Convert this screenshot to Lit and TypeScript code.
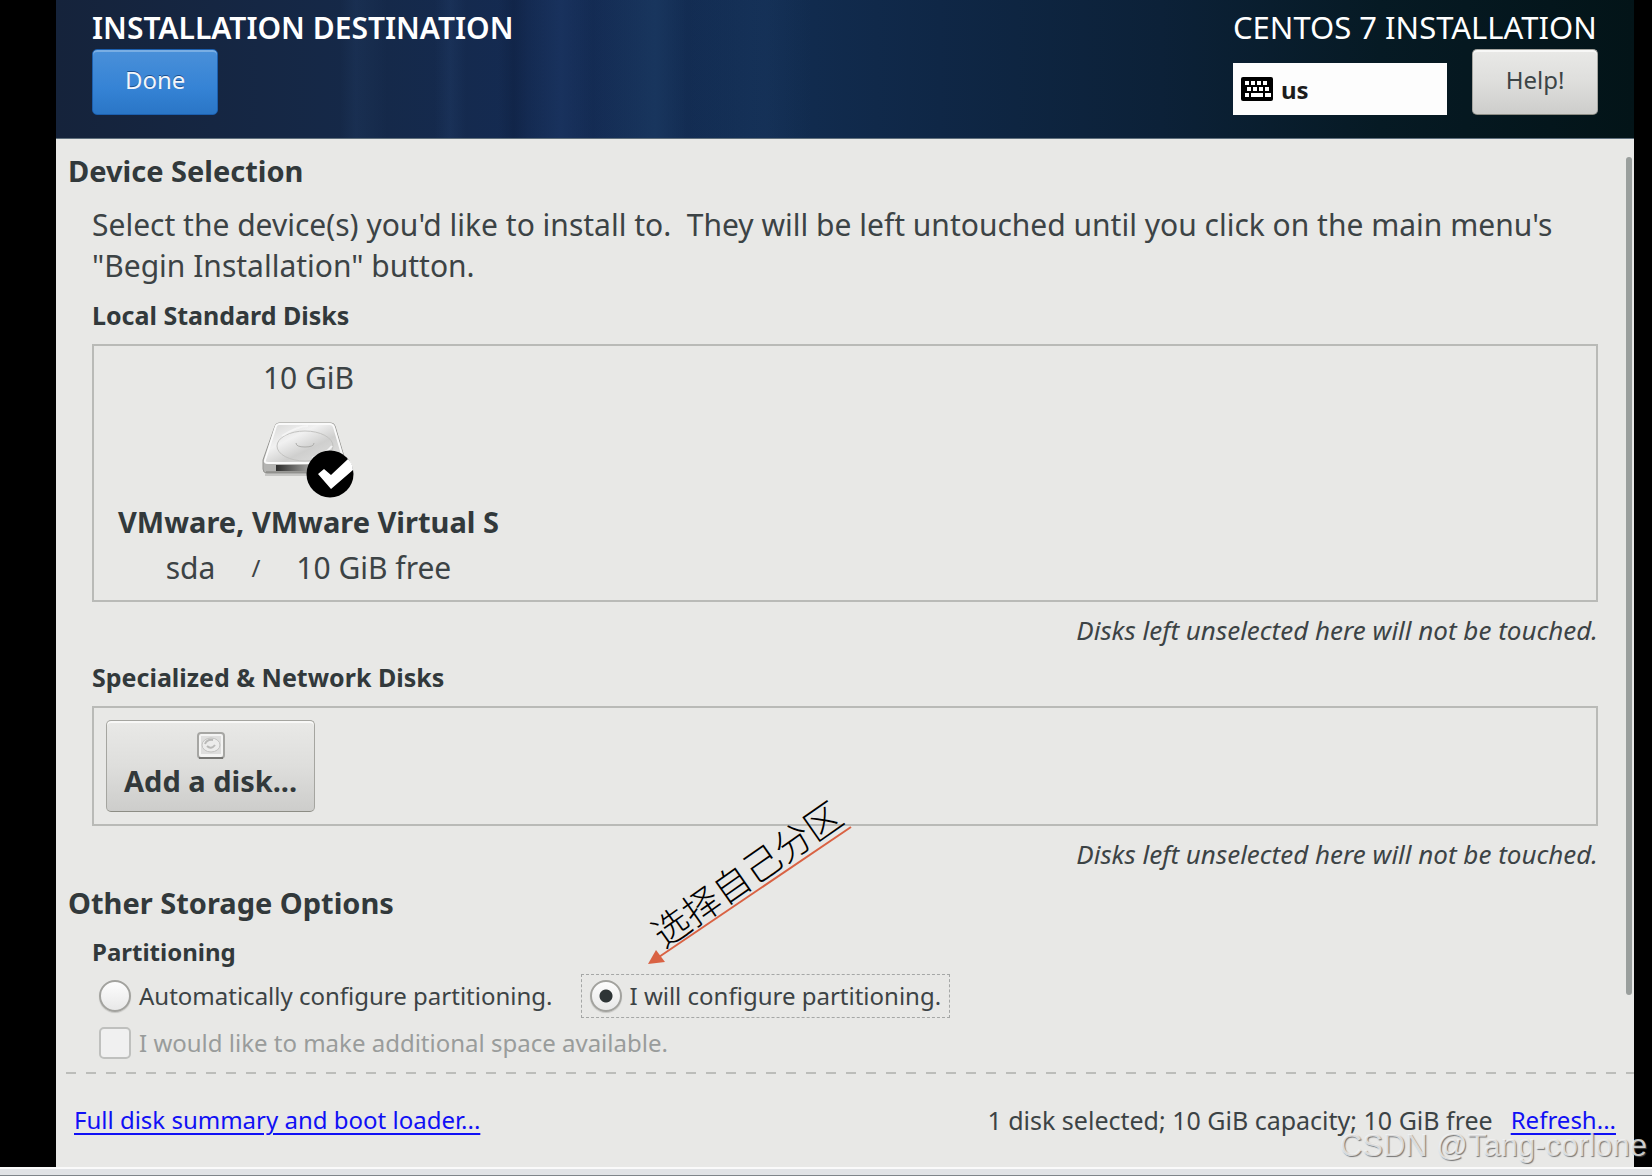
import { LitElement, html, css, svg } from "lit";
import { customElement, state } from "lit/decorators.js";

const keyRows = [
  { y: 4, keys: [[4, 4], [10, 4], [16, 4], [22, 4]] },
  { y: 10, keys: [[6, 4], [12, 4], [18, 4], [24, 4]] },
  { y: 16, keys: [[4, 4], [10, 12], [24, 6]] },
];

@customElement("app-root")
export class AppRoot extends LitElement {
  @state() private mode = "manual";

  static styles = css`
    :host {
      display: block;
      font-family: "Noto Sans", "Open Sans", sans-serif;
      color: #3c4345;
    }
    * { box-sizing: border-box; }
    button { font: inherit; color: inherit; margin: 0; }
    .screen {
      position: relative;
      display: flex;
      flex-direction: column;
      min-height: 100vh;
      background: #000;
    }
    .window {
      flex: 1;
      display: flex;
      flex-direction: column;
      margin: 0 18px 0 56px;
      background: #e8e8e6;
    }
    .header {
      display: flex;
      justify-content: space-between;
      padding: 6px 36px 23px;
      border-bottom: 1px solid #5f6f7c;
      color: #fff;
      background:
        linear-gradient(90deg, transparent 18%, rgba(80, 130, 200, 0.07) 19%, transparent 21% 24%, rgba(80, 130, 200, 0.08) 25%, transparent 26% 28%, rgba(0, 10, 30, 0.16) 29%, transparent 30%, rgba(80, 130, 200, 0.08) 32%, transparent 34%, rgba(80, 150, 200, 0.09) 38%, transparent 40%, rgba(80, 130, 200, 0.05) 45%, transparent 48%),
        linear-gradient(90deg, #15233b 0%, #152949 20%, #142b54 32%, #122d52 44%, #0f2746 56%, #0c2138 70%, #061a24 84%, #031418 100%);
    }
    .title {
      margin: 0;
      font-size: 30px;
      line-height: 43px;
      font-weight: 600;
    }
    .product { font-size: 31px; font-weight: 400; }
    .tools { display: flex; align-items: flex-end; gap: 25px; }
    .btn {
      height: 66px;
      min-width: 126px;
      border: 1px solid #a5a5a0;
      border-bottom-color: #8d8d85;
      border-radius: 5px;
      background: linear-gradient(#e9e9e7, #dededc 50%, #cdcdcb);
      box-shadow: inset 0 2px 0 #f8f8f7;
      color: #3c4446;
      font-size: 24px;
      line-height: 36px;
      padding: 0 32px 4px;
    }
    .primary {
      border-color: #1c5fae;
      background: linear-gradient(#4a90d9, #3583d5 60%, #2a76c6);
      box-shadow: inset 0 2px 0 #79aee4;
      color: #f2f6fb;
      text-shadow: 0 -1px 0 #1d4f8c;
    }
    .layout {
      display: flex;
      align-items: center;
      gap: 8px;
      width: 214px;
      height: 52px;
      padding: 0 8px;
      border: 0;
      background: #fdfdfd;
      color: #1c1c1c;
      font-size: 24px;
      font-weight: 700;
    }
    .body { flex: 1; display: flex; }
    .content { flex: 1; min-width: 0; padding: 12px 28px 0 12px; }
    .scroll { width: 8px; padding: 18px 2px 77px 0; display: flex; }
    .thumb { flex: 1; border-radius: 3px; background: #9a9f9d; }
    h2, h3, .name, .add { color: #32393b; font-weight: 700; }
    h2 { margin: 0; font-size: 29px; line-height: 40px; }
    .section + h2 { margin-top: 11px; }
    h3 { margin: 11px 0; font-size: 25px; line-height: 36px; }
    .sub { margin-bottom: 4px; font-size: 24px; }
    .section { padding-left: 24px; }
    .lead { margin: 13px 0 0; font-size: 30px; line-height: 41px; white-space: pre-wrap; }
    .panel { display: flex; border: 2px solid #b9bab7; padding: 12px; }
    .note { margin: 10px 0; font-size: 26px; line-height: 36px; font-style: italic; text-align: right; }
    .disk {
      display: flex;
      flex-direction: column;
      align-items: center;
      padding: 0 12px;
      border: 0;
      background: none;
      font-size: 30px;
      line-height: 40px;
    }
    .drive { margin: 24px 0 4px; display: block; }
    .name { font-size: 29px; }
    .meta { display: flex; gap: 36px; margin-top: 6px; }
    .slash { font-size: 24px; }
    .add {
      display: flex;
      flex-direction: column;
      align-items: center;
      gap: 3px;
      height: 92px;
      padding: 11px 17px 0;
      font-size: 29px;
    }
    .options { display: flex; gap: 19px; }
    .option {
      display: flex;
      align-items: center;
      gap: 8px;
      height: 44px;
      padding: 0 8px 0 6px;
      border: 1px dashed transparent;
      font-size: 24px;
      line-height: 36px;
    }
    .option.focused { border-color: #a5a7a6; padding-left: 8px; }
    .option.off { color: #999c9b; margin-top: 3px; }
    .option input {
      appearance: none;
      width: 32px;
      height: 32px;
      margin: 0;
      border: 2px solid #a2a29e;
      background: linear-gradient(#fdfdfd, #e8e8e8);
      box-shadow: 0 1px 1px #c4c4c1;
    }
    .option input[type="radio"] { border-radius: 50%; }
    .option input[type="radio"]:checked {
      background: radial-gradient(circle, #2e3436 0 6px, transparent 7px), linear-gradient(#fdfdfd, #e8e8e8);
    }
    .option input[type="checkbox"] { border-radius: 5px; border-color: #bfc0be; background: #f0f0f0; box-shadow: none; }
    .rule {
      height: 2px;
      margin-left: 10px;
      background: repeating-linear-gradient(90deg, #bcbdba 0 10px, transparent 10px 20px);
    }
    .footer {
      display: flex;
      justify-content: space-between;
      align-items: center;
      padding: 28px 18px 29px;
      font-size: 24px;
      line-height: 36px;
    }
    .footer a { color: #1010f5; text-underline-offset: 4px; text-decoration-thickness: 2px; }
    .summary { display: flex; gap: 18px; }
    .totals { font-size: 25px; }
    .strip {
      height: 9px;
      border-top: 2px solid #fafafa;
      border-bottom: 1px solid #7f858a;
      background: #e1e3e6;
    }
    .annotation { position: absolute; left: 640px; top: 780px; pointer-events: none; }
    .callout { font: 300 37px "Noto Sans CJK SC", sans-serif; fill: #000; }
    .watermark {
      position: absolute;
      right: 5px;
      bottom: 12px;
      font: 31px/36px "Liberation Sans", Arial, sans-serif;
      color: rgba(245, 245, 245, 0.8);
      text-shadow: 1px 1px 1px rgba(90, 90, 90, 0.8);
      pointer-events: none;
    }
  `;

  private keyboardIcon() {
    return html`<svg width="32" height="24" viewBox="0 0 32 24" aria-hidden="true">
      <rect width="32" height="24" rx="2" fill="#000" />
      ${keyRows.map((r) => r.keys.map(([x, w]) => svg`<rect x=${x} y=${r.y} width=${w} height="4" fill="#fff" />`))}
    </svg>`;
  }

  private driveIcon() {
    return html`<svg class="drive" width="92" height="76" viewBox="0 0 92 76" aria-hidden="true">
      <defs>
        <linearGradient id="top" x1="0" y1="0" x2="1" y2="1">
          <stop offset="0" stop-color="#d6d6d5" /><stop offset=".35" stop-color="#f1f1f1" />
          <stop offset=".6" stop-color="#cfcfce" /><stop offset="1" stop-color="#e4e4e3" />
        </linearGradient>
        <linearGradient id="slot"><stop offset="0" stop-color="#2d2d2c" /><stop offset="1" stop-color="#b5b5b3" /></linearGradient>
      </defs>
      <path d="M3 52h78" stroke="#c6c6c4" stroke-width="4" />
      <path d="M17 1h52q3 0 4 3l10 34v10q0 3-4 3H5q-4 0-4-4V38L13 4q1-3 4-3z" fill="#b4b4b2" stroke="#969693" />
      <path d="M17 2h51q3 0 4 3l10 34q0 2-3 2H6q-4 0-3-3L14 4q1-2 3-2z" fill="url(#top)" stroke="#fafafa" stroke-width="2" />
      <ellipse cx="43" cy="24" rx="28" ry="15" fill="none" stroke="#c2c2c0" />
      <path d="M20 14q16-10 26-10M50 36q14-4 20-12" fill="none" stroke="#f4f4f4" stroke-width="2" />
      <path d="M34 21q0 4 9 4t9-4" fill="none" stroke="#adadab" />
      <path d="M14 43h40v6H14z" fill="url(#slot)" />
      <path d="M4 50h76" stroke="#7c7c79" />
      <circle cx="68" cy="52" r="23.500" fill="#000" />
      <path d="M56 52l6-5 7 6 17-16q5 5 5 11L69 67z" fill="#fff" />
    </svg>`;
  }

  private smallDriveIcon() {
    return html`<svg width="28" height="28" viewBox="0 0 28 28" aria-hidden="true">
      <rect x="1" y="1" width="26" height="25" rx="3" fill="#f4f4f3" stroke="#a6a6a3" stroke-width="2" />
      <path d="M2 26h24" stroke="#777774" stroke-width="2" />
      <rect x="4" y="4" width="20" height="18" fill="#dededd" />
      <ellipse cx="14" cy="13" rx="9" ry="7" fill="#ececeb" stroke="#c2c2c0" />
      <path d="M8 12q2-5 8-4M10 14q4 4 8-1" fill="none" stroke="#b9b9b7" stroke-width="2" />
    </svg>`;
  }

  private radio(id: string, label: string) {
    const on = this.mode === id;
    return html`<label class="option ${on ? "focused" : ""}">
      <input type="radio" name="partitioning" .checked=${on} @change=${() => (this.mode = id)} />${label}
    </label>`;
  }

  render() {
    return html`<div class="screen">
      <div class="window">
        <header class="header">
          <div>
            <h1 class="title">INSTALLATION DESTINATION</h1>
            <button class="btn primary">Done</button>
          </div>
          <div>
            <p class="title product">CENTOS 7 INSTALLATION</p>
            <div class="tools">
              <button class="layout">${this.keyboardIcon()}us</button>
              <button class="btn">Help!</button>
            </div>
          </div>
        </header>
        <div class="body">
          <main class="content">
            <h2>Device Selection</h2>
            <div class="section">
              <p class="lead">Select the device(s) you'd like to install to.  They will be left untouched until you click on the main menu's "Begin Installation" button.</p>
              <h3>Local Standard Disks</h3>
              <div class="panel">
                <button class="disk" aria-pressed="true">
                  <span>10 GiB</span>
                  ${this.driveIcon()}
                  <span class="name">VMware, VMware Virtual S</span>
                  <span class="meta"><span>sda</span><span class="slash">/</span><span>10 GiB free</span></span>
                </button>
              </div>
              <p class="note">Disks left unselected here will not be touched.</p>
              <h3>Specialized &amp; Network Disks</h3>
              <div class="panel">
                <button class="btn add">${this.smallDriveIcon()}<span>Add a disk...</span></button>
              </div>
              <p class="note">Disks left unselected here will not be touched.</p>
            </div>
            <h2>Other Storage Options</h2>
            <div class="section">
              <h3 class="sub">Partitioning</h3>
              <div class="options">
                ${this.radio("auto", "Automatically configure partitioning.")}
                ${this.radio("manual", "I will configure partitioning.")}
              </div>
              <label class="option off"><input type="checkbox" disabled />I would like to make additional space available.</label>
            </div>
          </main>
          <div class="scroll"><div class="thumb"></div></div>
        </div>
        <div class="rule"></div>
        <footer class="footer">
          <a href="#summary">Full disk summary and boot loader...</a>
          <div class="summary">
            <span class="totals">1 disk selected; 10 GiB capacity; 10 GiB free</span>
            <a href="#refresh">Refresh...</a>
          </div>
        </footer>
      </div>
      <div class="strip"></div>
      <svg class="annotation" width="230" height="190" viewBox="0 0 230 190">
        <path d="M211 47L16 179" stroke="#d96243" stroke-width="2" />
        <path d="M8 184L16 170L25 182z" fill="#d96243" />
        <text class="callout" transform="translate(24 169) rotate(-35)">选择自己分区</text>
      </svg>
      <div class="watermark">CSDN @Tang-corlone</div>
    </div>`;
  }
}
